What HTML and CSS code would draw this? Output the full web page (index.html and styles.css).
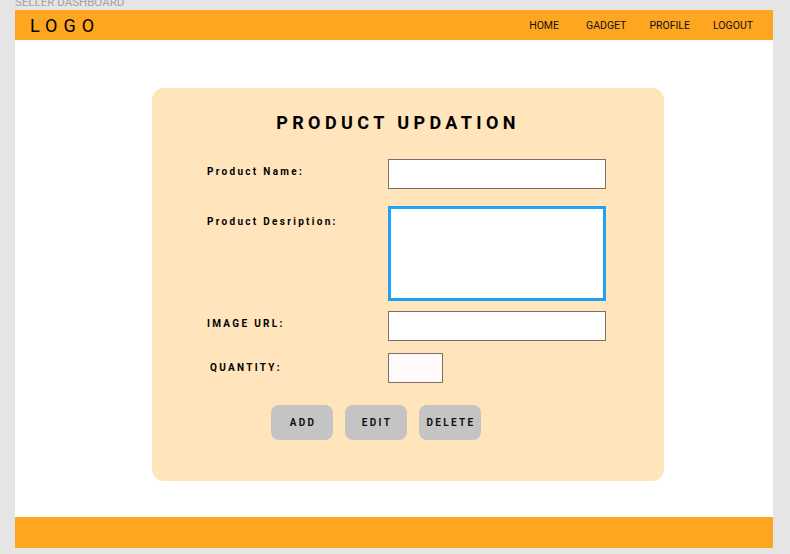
FILE: index.html
```html
<!DOCTYPE html>
<html lang="en">
  <head>
    <meta charset="UTF-8" />
    <meta name="viewport" content="width=device-width, initial-scale=1.0" />
    <title>Seller Dashboard</title>
    <link rel="stylesheet" href="styles.css">
  </head>
  <body>
    <div class="caption">SELLER DASHBOARD</div>
    <div class="frame">
      <header class="topbar">
        <div class="logo">LOGO</div>
        <nav class="nav">
          <a href="#">HOME</a>
          <a href="#">GADGET</a>
          <a href="#">PROFILE</a>
          <a href="#">LOGOUT</a>
        </nav>
      </header>
      <main class="main">
        <form class="card" id="productForm">
          <h1 class="title">PRODUCT UPDATION</h1>
          <div class="row row-name">
            <label for="productName">Product Name:</label>
            <input type="text" id="productName" class="field" />
          </div>
          <div class="row row-desc">
            <label for="productDesc">Product Desription:</label>
            <textarea id="productDesc" class="field area"></textarea>
          </div>
          <div class="row row-url">
            <label for="imageUrl">IMAGE URL:</label>
            <input type="text" id="imageUrl" class="field" />
          </div>
          <div class="row row-qty">
            <label for="quantity" class="qty-label">QUANTITY:</label>
            <input type="number" id="quantity" class="field qty" />
          </div>
          <div class="buttons">
            <button type="button">ADD</button>
            <button type="button">EDIT</button>
            <button type="button">DELETE</button>
          </div>
        </form>
      </main>
      <footer class="footer"></footer>
    </div>
  </body>
</html>
```

FILE: styles.css
```css
body {
  margin: 0;
  background-color: #e5e5e5;
  font-family: Roboto, "Liberation Sans", Arial, sans-serif;
}
.caption {
  height: 14px;
  margin-top: -4px;
  padding-left: 15px;
  font-size: 11.5px;
  line-height: 12px;
  color: #a3a3a3;
}
.frame {
  width: 758px;
  margin-left: 15px;
  background-color: white;
}
.topbar {
  height: 30px;
  background-color: #ffa620;
  display: flex;
  align-items: center;
  justify-content: space-between;
  padding: 0 20px 0 15px;
}
.logo {
  font-size: 18px;
  letter-spacing: 6px;
  color: #000;
}
.nav {
  display: flex;
  gap: 23px;
}
.nav a {
  font-size: 10.5px;
  color: #111;
  text-decoration: none;
}
.nav a:nth-child(2) {
  margin-left: 4px;
}
.main {
  height: 477px;
  padding-top: 48px;
  box-sizing: border-box;
}
.card {
  width: 512px;
  height: 393px;
  margin-left: 137px;
  background-color: #ffe4bc;
  border-radius: 12px;
  box-sizing: border-box;
  padding-top: 24px;
}
.title {
  margin: 0 0 25px 0;
  text-align: center;
  font-size: 18px;
  font-weight: bold;
  letter-spacing: 4.4px;
  line-height: 22px;
  padding-right: 20px;
}
.row {
  display: grid;
  grid-template-columns: 181px 218px;
  padding-left: 55px;
  align-items: start;
}
.row label {
  font-size: 10px;
  font-weight: bold;
  letter-spacing: 2.3px;
  padding-top: 7px;
}
.row-desc {
  margin-top: 17px;
}
.row-desc label {
  padding-top: 10px;
}
.row-url {
  margin-top: 10px;
}
.row-url label {
  padding-top: 7px;
}
.row-qty {
  margin-top: 12px;
}
.row-qty label {
  padding-top: 9px;
}
.qty-label {
  padding-left: 3px;
}
.field {
  width: 218px;
  height: 30px;
  box-sizing: border-box;
  border: 1px solid #7a7068;
  background-color: white;
  margin: 0;
  padding: 2px 4px;
  font-family: inherit;
}
.area {
  height: 95px;
  border: 3px solid #1ea2f2;
  resize: none;
  outline: none;
}
.qty {
  width: 55px;
  background-color: #fffafa;
}
.buttons {
  display: flex;
  gap: 12px;
  padding-left: 119px;
  margin-top: 22px;
}
.buttons button {
  width: 62px;
  height: 35px;
  border: none;
  border-radius: 8px;
  background-color: #c4c4c4;
  font-family: inherit;
  font-size: 10px;
  font-weight: bold;
  letter-spacing: 2.3px;
  color: #111;
  padding: 0 0 0 2px;
}
.footer {
  height: 31px;
  background-color: #ffa620;
}
```
